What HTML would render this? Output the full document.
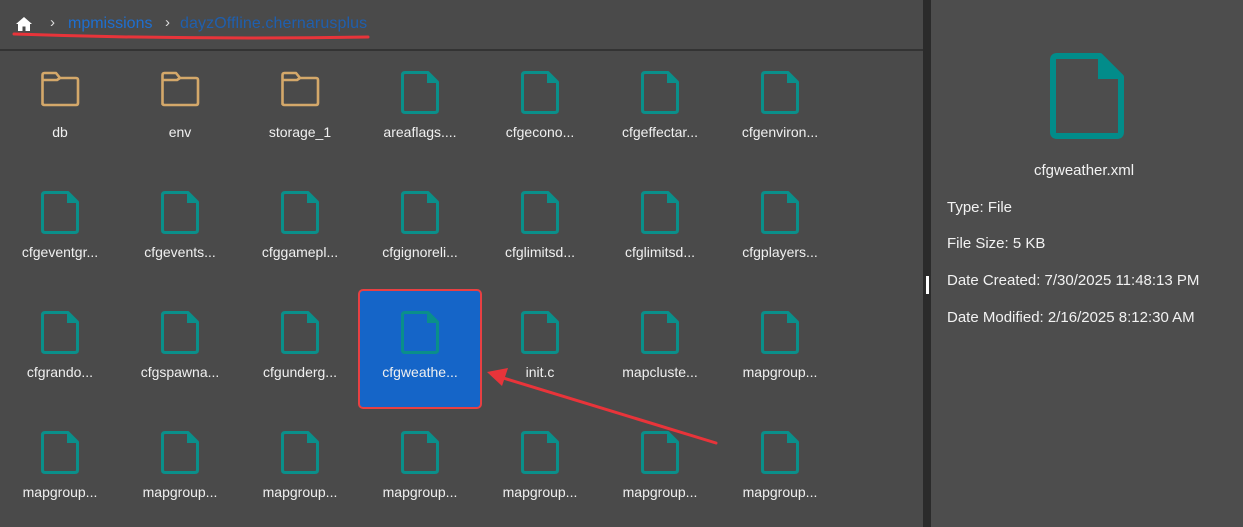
<!DOCTYPE html>
<html><head><style>
body{margin:0;width:1243px;height:527px;background:#4a4a4a;font-family:"Liberation Sans",sans-serif;overflow:hidden;position:relative;color:#f0f0f0}
.hdr{position:absolute;left:0;top:0;width:923px;height:49px;border-bottom:2px solid #333}
.div{position:absolute;left:923px;top:0;width:8px;height:527px;background:#2b2b2b}
.right{position:absolute;left:931px;top:0;right:0;bottom:0;background:#4d4d4d}
.item{position:absolute;width:120px;text-align:center;font-size:14px}
.item svg{position:absolute;left:40px}
.item span{position:absolute;left:0;width:120px}
.info{position:absolute;left:947px;font-size:15px;color:#f2f2f2}
</style></head><body>
<div class="hdr"></div>
<svg style="position:absolute;left:16px;top:17px" width="16" height="14" viewBox="0 0 16 14"><path d="M8 0L0 7h2v7h4.5V9.5h3V14H14V7h2z" fill="#fff"/></svg>
<div style="position:absolute;left:50px;top:14px;font-size:15px;color:#ddd">›</div>
<div style="position:absolute;left:68px;top:15px;font-size:16px;color:#1e6fd0">mpmissions</div>
<div style="position:absolute;left:165px;top:14px;font-size:15px;color:#ddd">›</div>
<div style="position:absolute;left:180px;top:15px;font-size:16px;color:#1f5fae;letter-spacing:0.1px">dayzOffline.chernarusplus</div>
<svg style="position:absolute;left:0;top:0" width="1243" height="527">
<path d="M14 34 Q190 40 368 37" stroke="#e8343a" stroke-width="3" fill="none" stroke-linecap="round"/>
<path d="M1028 183 Q1090 180 1151 182" stroke="#e8343a" stroke-width="3" fill="none" stroke-linecap="round"/>
</svg>
<div class="div"></div>
<div class="right"></div>
<div style="position:absolute;left:926px;top:276px;width:3px;height:18px;background:#fff"></div>
<svg style="position:absolute;left:1050px;top:53px" width="74" height="86" viewBox="0 0 74 86"><path d="M7 3H50L71 24V79Q71 83 67 83H7Q3 83 3 79V7Q3 3 7 3Z" fill="none" stroke="#028c8a" stroke-width="6" stroke-linejoin="round"/><path d="M48 3V26H71Z" fill="#028c8a"/></svg>
<div style="position:absolute;left:1034px;top:162px;font-size:15px;color:#f2f2f2">cfgweather.xml</div>
<div class="info" style="top:199px">Type: File</div>
<div class="info" style="top:235px">File Size: 5 KB</div>
<div class="info" style="top:272px">Date Created: 7/30/2025 11:48:13 PM</div>
<div class="info" style="top:309px">Date Modified: 2/16/2025 8:12:30 AM</div>
<div style="position:absolute;left:358px;top:289px;width:120px;height:116px;background:#1565c8;border:2px solid #e84043;border-radius:5px"></div>
<div id="g"></div>
<script>
var rows=[["db","env","storage_1","areaflags....","cfgecono...","cfgeffectar...","cfgenviron..."],
["cfgeventgr...","cfgevents...","cfggamepl...","cfgignoreli...","cfglimitsd...","cfglimitsd...","cfgplayers..."],
["cfgrando...","cfgspawna...","cfgunderg...","cfgweathe...","init.c","mapcluste...","mapgroup..."],
["mapgroup...","mapgroup...","mapgroup...","mapgroup...","mapgroup...","mapgroup...","mapgroup..."]];
var h="";
var file='<svg style="top:1px" width="40" height="46" viewBox="0 0 40 46"><path d="M5 3.5H28L37.5 13V41Q37.5 43.5 35 43.5H5Q2.5 43.5 2.5 41V6Q2.5 3.5 5 3.5Z" fill="none" stroke="#0a8f8a" stroke-width="3" stroke-linejoin="round"/><path d="M27 3.5V14H37.5Z" fill="#0a8f8a"/></svg>';
var fold='<svg style="top:3px" width="40" height="36" viewBox="0 0 40 36"><path d="M2.5 33V4Q2.5 2 4.5 2H16L20 7H36Q38 7 38 9V32Q38 34 36 34H4.5Q2.5 34 2.5 32Z M2.5 9H17L20 7" fill="none" stroke="#d4a86a" stroke-width="2.6" stroke-linejoin="round"/></svg>';
for(var r=0;r<4;r++)for(var c=0;c<7;c++){
var t=r*120+68,isF=(r==0&&c<3);
h+='<div class="item" style="left:'+c*120+'px;top:'+t+'px">'+(isF?fold:file)+'<span style="top:56px">'+rows[r][c]+'</span></div>';}
document.getElementById("g").innerHTML=h;
</script>
<svg style="position:absolute;left:0;top:0" width="1243" height="527">
<path d="M716 443L500 377" stroke="#e8343a" stroke-width="3" stroke-linecap="round"/>
<path d="M487 372L508 368L502 386Z" fill="#e8343a"/>
</svg>
</body></html>
